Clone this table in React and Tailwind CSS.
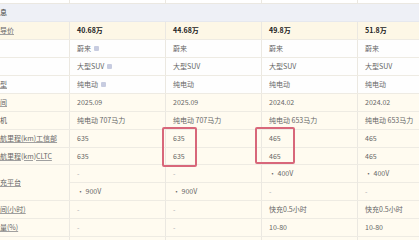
import React from "react";

const CREAM = "bg-[#fffbf0]";
const PRICE = "bg-[#fdf7e6]";
const WHITE = "bg-[#fefefe]";

function Label({ children, underline = true }) {
  return (
    <div className="w-[100px] shrink-0 h-full flex items-center pl-[9px] border-r border-[#ebe8e1] whitespace-nowrap overflow-hidden">
      <span className={underline ? "underline decoration-[#a0a0a0] underline-offset-[1px] text-[#666]" : "text-[#555]"}>
        {children}
      </span>
    </div>
  );
}

function Cell({ children, className = "" }) {
  return (
    <div className={`w-[96px] shrink-0 h-full flex items-center pl-[7px] border-r border-[#ebe8e1] whitespace-nowrap ${className}`}>
      {children}
    </div>
  );
}

function Icon() {
  return <span className="inline-block w-[5px] h-[5px] ml-[3px] bg-[#c7cce0] rounded-[1px]" />;
}

function Row({ bg, label, underline, values, h = "h-[18px]", valueClass = "text-[#666]" }) {
  return (
    <div className={`flex ${h} border-b border-[#eeebe3] ${bg}`}>
      <Label underline={underline}>{label}</Label>
      {values.map((v, i) => (
        <Cell key={i} className={v === "-" ? "text-[#aaa]" : valueClass}>
          {v}
        </Cell>
      ))}
    </div>
  );
}

export default function App() {
  return (
    <div
      className="relative w-[419px] h-[240px] overflow-hidden bg-white text-[7px] leading-none"
      style={{ fontFamily: '"Noto Sans CJK SC", "Noto Sans", sans-serif' }}
    >
      <div className="-ml-[30px] w-[514px]">
        {/* partial top row */}
        <div className="flex h-[4px] border-b border-[#ebe8e1] bg-white">
          <div className="w-[100px] shrink-0 border-r border-[#ebe8e1]" />
          <div className="w-[96px] shrink-0 border-r border-[#ebe8e1]" />
          <div className="w-[96px] shrink-0 border-r border-[#ebe8e1]" />
          <div className="w-[96px] shrink-0 border-r border-[#ebe8e1]" />
          <div className="w-[96px] shrink-0 border-r border-[#ebe8e1]" />
        </div>
        {/* section header */}
        <div className="flex h-[18px] items-center bg-[#eef0f6] border-b border-[#e6e8ee] pl-[9px] text-[#444]">
          基本信息
        </div>
        <Row
          bg={PRICE}
          label="官方指导价"
          values={["40.68万", "44.68万", "49.8万", "51.8万"]}
          valueClass="text-[#222] font-bold"
        />
        <div className={`flex h-[18px] border-b border-[#eeebe3] ${WHITE}`}>
          <Label underline={false}>厂商</Label>
          <Cell className="text-[#666]">蔚来<Icon /></Cell>
          <Cell className="text-[#666]">蔚来</Cell>
          <Cell className="text-[#666]">蔚来</Cell>
          <Cell className="text-[#666]">蔚来</Cell>
        </div>
        <div className={`flex h-[18px] border-b border-[#eeebe3] ${WHITE}`}>
          <Label underline={false}>级别</Label>
          <Cell className="text-[#666]">大型SUV<Icon /></Cell>
          <Cell className="text-[#666]">大型SUV</Cell>
          <Cell className="text-[#666]">大型SUV</Cell>
          <Cell className="text-[#666]">大型SUV</Cell>
        </div>
        <div className={`flex h-[18px] border-b border-[#eeebe3] ${WHITE}`}>
          <Label>能源类型</Label>
          <Cell className="text-[#666]">纯电动<Icon /></Cell>
          <Cell className="text-[#666]">纯电动</Cell>
          <Cell className="text-[#666]">纯电动</Cell>
          <Cell className="text-[#666]">纯电动</Cell>
        </div>
        <Row bg={CREAM} label="上市时间" values={["2025.09", "2025.09", "2024.02", "2024.02"]} />
        <Row
          bg={CREAM}
          label="驱动电机"
          underline={false}
          values={["纯电动 707马力", "纯电动 707马力", "纯电动 653马力", "纯电动 653马力"]}
        />
        <Row bg={CREAM} label="纯电续航里程(km)工信部" values={["635", "635", "465", "465"]} />
        <Row bg={CREAM} h="h-[17px]" label="纯电续航里程(km)CLTC" values={["635", "635", "465", "465"]} />
        {/* platform rows with rowspan label */}
        <div className={`flex h-[36px] border-b border-[#eeebe3] ${CREAM}`}>
          <Label>高压快充平台</Label>
          {[
            ["-", "· 900V"],
            ["-", "· 900V"],
            ["· 400V", "-"],
            ["· 400V", "-"],
          ].map((pair, i) => (
            <div key={i} className="w-[96px] shrink-0 flex flex-col border-r border-[#ebe8e1]">
              <div className={`h-[18px] flex items-center pl-[7px] border-b border-[#eeebe3] ${pair[0] === "-" ? "text-[#aaa]" : "text-[#666]"}`}>
                {pair[0]}
              </div>
              <div className={`h-[17px] flex items-center pl-[7px] ${pair[1] === "-" ? "text-[#aaa]" : "text-[#666]"}`}>
                {pair[1]}
              </div>
            </div>
          ))}
        </div>
        <Row bg={CREAM} label="快充时间(小时)" values={["-", "-", "快充0.5小时", "快充0.5小时"]} />
        <Row bg={CREAM} label="快充电量(%)" values={["-", "-", "10-80", "10-80"]} />
        <Row bg={CREAM} label="" underline={false} values={["", "", "", ""]} />
      </div>

      {/* highlight boxes */}
      <div className="absolute left-[162px] top-[127px] w-[35px] h-[40px] border-2 border-[#d8677a] rounded-[2px]" />
      <div className="absolute left-[255px] top-[127px] w-[40px] h-[37px] border-2 border-[#d8677a] rounded-[2px]" />
    </div>
  );
}
